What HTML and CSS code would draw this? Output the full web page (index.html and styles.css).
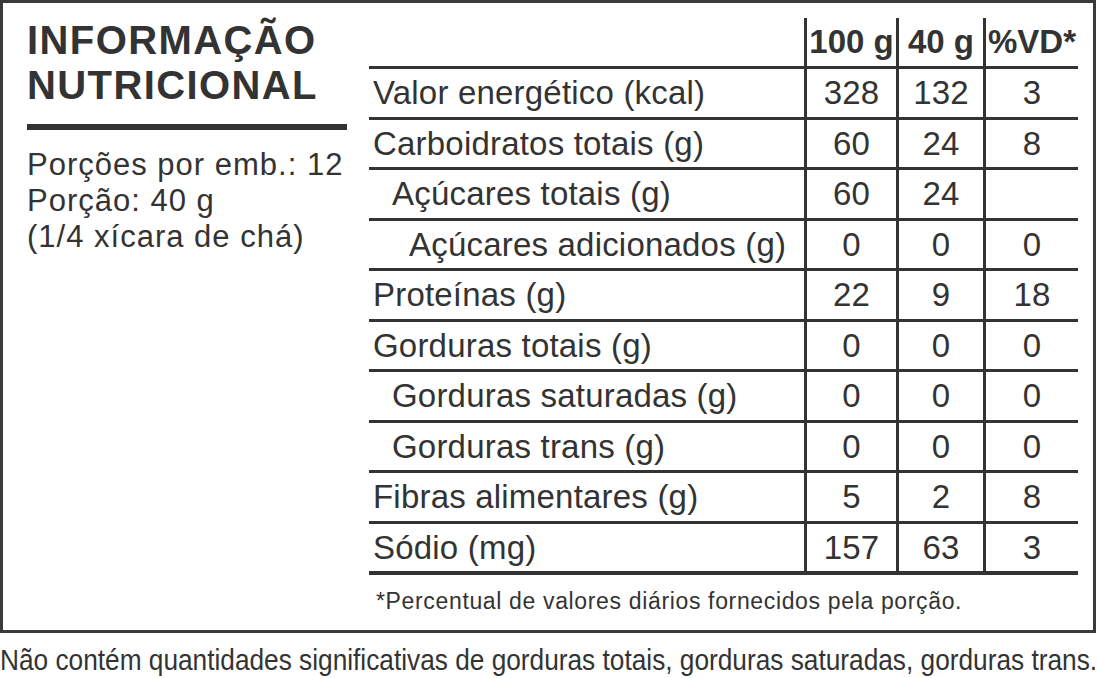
FILE: index.html
```html
<!DOCTYPE html>
<html lang="pt-BR">
<head>
<meta charset="utf-8">
<title>Informação Nutricional</title>
<link rel="stylesheet" href="styles.css">
</head>
<body>
<div class="label">
  <div class="panel">
    <div class="intro">
      <h1 class="title">INFORMAÇÃO<br>NUTRICIONAL</h1>
      <div class="rule"></div>
      <p class="serving">Porções por emb.: 12<br>Porção: 40 g<br>(1/4 xícara de chá)</p>
    </div>
    <div class="facts">
      <div class="table">
        <div class="row head">
          <div class="cell name"></div>
          <div class="cell num">100 g</div>
          <div class="cell num">40 g</div>
          <div class="cell num">%VD*</div>
        </div>
        <div class="row">
          <div class="cell name">Valor energético (kcal)</div>
          <div class="cell num">328</div>
          <div class="cell num">132</div>
          <div class="cell num">3</div>
        </div>
        <div class="row">
          <div class="cell name">Carboidratos totais (g)</div>
          <div class="cell num">60</div>
          <div class="cell num">24</div>
          <div class="cell num">8</div>
        </div>
        <div class="row">
          <div class="cell name sub1">Açúcares totais (g)</div>
          <div class="cell num">60</div>
          <div class="cell num">24</div>
          <div class="cell num"></div>
        </div>
        <div class="row">
          <div class="cell name sub2">Açúcares adicionados (g)</div>
          <div class="cell num">0</div>
          <div class="cell num">0</div>
          <div class="cell num">0</div>
        </div>
        <div class="row">
          <div class="cell name">Proteínas (g)</div>
          <div class="cell num">22</div>
          <div class="cell num">9</div>
          <div class="cell num">18</div>
        </div>
        <div class="row">
          <div class="cell name">Gorduras totais (g)</div>
          <div class="cell num">0</div>
          <div class="cell num">0</div>
          <div class="cell num">0</div>
        </div>
        <div class="row">
          <div class="cell name sub1">Gorduras saturadas (g)</div>
          <div class="cell num">0</div>
          <div class="cell num">0</div>
          <div class="cell num">0</div>
        </div>
        <div class="row">
          <div class="cell name sub1">Gorduras trans (g)</div>
          <div class="cell num">0</div>
          <div class="cell num">0</div>
          <div class="cell num">0</div>
        </div>
        <div class="row">
          <div class="cell name">Fibras alimentares (g)</div>
          <div class="cell num">5</div>
          <div class="cell num">2</div>
          <div class="cell num">8</div>
        </div>
        <div class="row last">
          <div class="cell name">Sódio (mg)</div>
          <div class="cell num">157</div>
          <div class="cell num">63</div>
          <div class="cell num">3</div>
        </div>
      </div>
      <p class="note">*Percentual de valores diários fornecidos pela porção.</p>
    </div>
  </div>
  <p class="disclaimer"><span class="squeeze">Não contém quantidades significativas de gorduras totais, gorduras saturadas, gorduras trans.</span></p>
</div>
</body>
</html>
```

FILE: styles.css
```css
* {
  box-sizing: border-box;
}

html, body {
  margin: 0;
  padding: 0;
  background: #ffffff;
}

body {
  font-family: "Liberation Sans", Arial, sans-serif;
  color: #333333;
  width: 1097px;
  height: 678px;
  overflow: hidden;
}

.panel {
  width: 1096px;
  height: 633px;
  border: 3px solid #3a3a3a;
  display: flex;
  padding: 15px 15px 0 24px;
}

.intro {
  width: 320px;
  margin-right: 22px;
  flex: none;
}

.title {
  margin: 0;
  font-size: 40px;
  line-height: 45px;
  font-weight: 700;
  letter-spacing: 1.4px;
  white-space: nowrap;
}

.rule {
  margin-top: 16px;
  height: 6px;
  background: #333333;
}

.serving {
  margin: 17px 0 0;
  font-size: 31px;
  line-height: 36px;
  letter-spacing: 1px;
  white-space: nowrap;
}

.facts {
  width: 709px;
  flex: none;
}

.row {
  display: grid;
  grid-template-columns: 435px 92px 87px 95px;
  height: 50.5px;
  border-bottom: 3px solid #333333;
  font-size: 33px;
  line-height: 47.5px;
  letter-spacing: 0.2px;
  white-space: nowrap;
}

.row.head {
  height: 51px;
  line-height: 48px;
  font-weight: 700;
  letter-spacing: 0;
}

.row.last {
  height: 51.5px;
  border-bottom-width: 4px;
}

.cell.name {
  padding-left: 4px;
}

.cell.name.sub1 {
  padding-left: 23px;
}

.cell.name.sub2 {
  padding-left: 40px;
}

.cell.num {
  border-left: 3px solid #333333;
  text-align: center;
}

.note {
  margin: 0;
  padding: 11px 0 0 7px;
  font-size: 23px;
  line-height: 30px;
  letter-spacing: 0.65px;
  white-space: nowrap;
}

.disclaimer {
  width: 1097px;
  margin: 10px 0 0;
  font-size: 29px;
  line-height: 34px;
  white-space: nowrap;
  overflow: hidden;
}

.squeeze {
  display: inline-block;
  transform: scaleX(0.905);
  transform-origin: left center;
}
```
